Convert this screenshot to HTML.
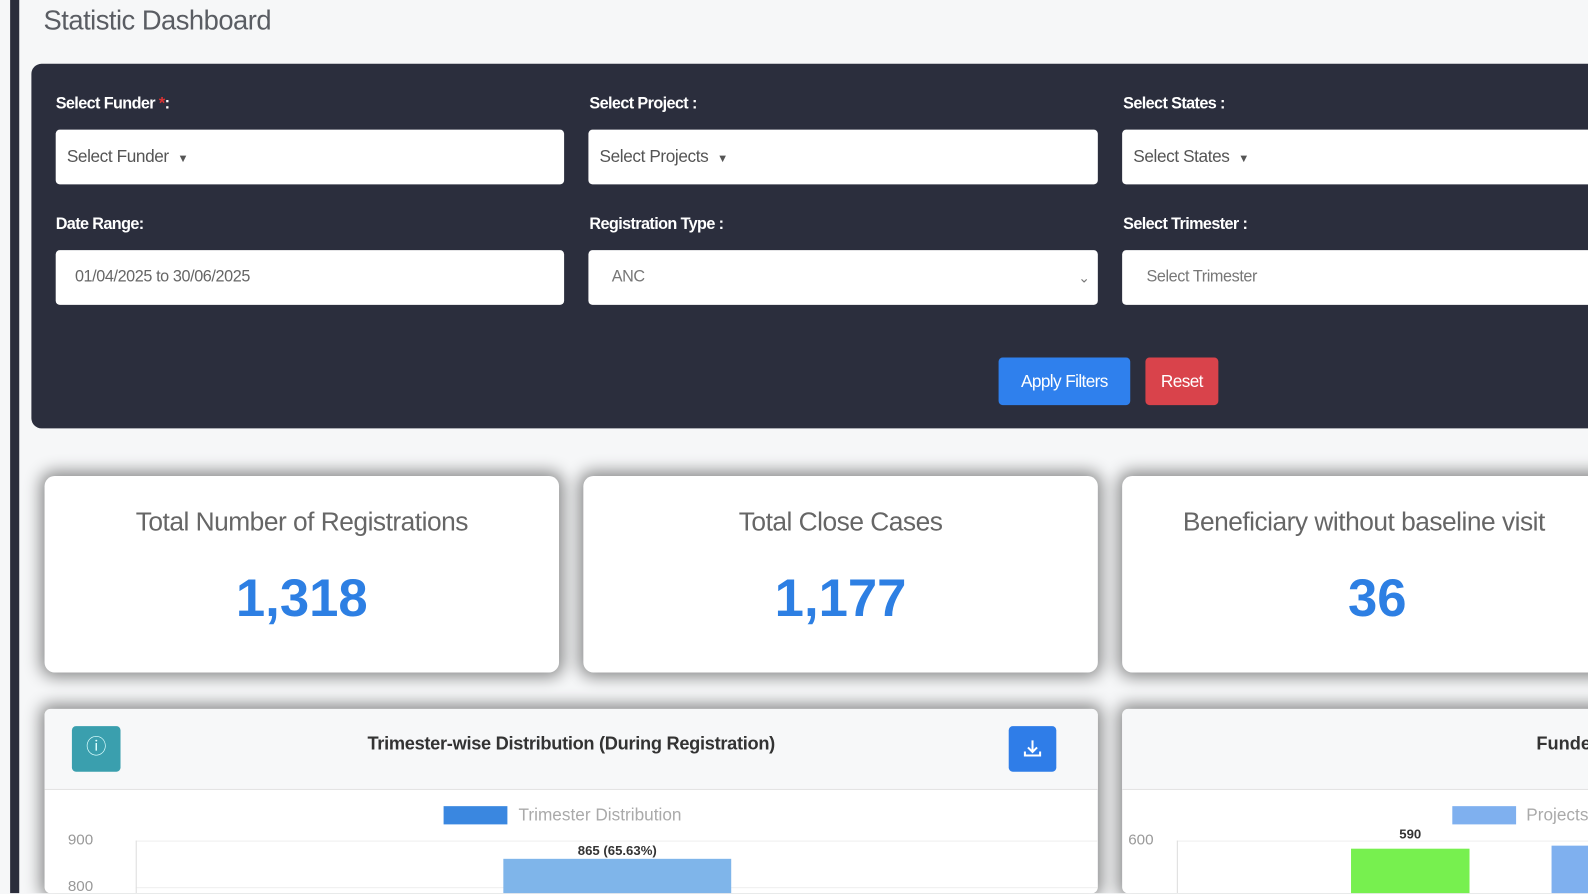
<!DOCTYPE html>
<html><head><meta charset="utf-8"><style>
*{box-sizing:border-box;margin:0;padding:0}
html,body{width:1588px;height:894px;overflow:hidden}
body{background:#f6f7f8;font-family:"Liberation Sans",sans-serif;position:relative}
#w{position:absolute;left:0;top:0;width:1568px;height:882px;transform:scale(1.01276);transform-origin:0 0;overflow:hidden}
.abs{position:absolute}
.bar{left:10px;top:0;width:9px;height:882px;background:#2a2d3b}
.title{left:43px;top:5px;font-size:27px;color:#5a5d63;letter-spacing:-0.5px}
.panel{left:31px;top:63px;width:1600px;height:360px;background:#2b2e3d;border-radius:10px}
.lbl{color:#fff;font-weight:bold;font-size:16px;letter-spacing:-0.6px}
.inp{background:#fff;border-radius:4px;height:54px;font-size:17px;color:#555;padding-left:11px;line-height:54px;letter-spacing:-0.4px}
.btn{color:#fff;font-size:17px;border-radius:4px;text-align:center;line-height:47px;letter-spacing:-0.6px}
.card{background:#fff;border-radius:10px;box-shadow:0 0 16px 4px rgba(0,0,0,0.45);text-align:center}
.ct{font-size:26px;color:#666;margin-top:30px;letter-spacing:-0.5px}
.cn{font-size:52px;color:#2d7fe3;font-weight:bold;margin-top:30px}
.chart{background:#fff;border-radius:6px;box-shadow:0 0 16px 4px rgba(0,0,0,0.45);height:182px;overflow:hidden}
.hdr{height:80px;background:#f7f8f9;border-bottom:1px solid #e3e3e3;position:relative}
.small{font-size:15px;color:#999}
</style></head><body><div id="w">
<div class="abs bar"></div>
<div class="abs title">Statistic Dashboard</div>
<div class="abs panel"></div>
<div class="abs lbl" style="left:55px;top:94px">Select Funder <span style="color:#d33">*</span>:</div>
<div class="abs lbl" style="left:582px;top:94px">Select Project :</div>
<div class="abs lbl" style="left:1109px;top:94px">Select States :</div>
<div class="abs inp" style="left:55px;top:128px;width:502px">Select Funder &nbsp;<span style="font-size:11px">▼</span></div>
<div class="abs inp" style="left:581px;top:128px;width:503px">Select Projects &nbsp;<span style="font-size:11px">▼</span></div>
<div class="abs inp" style="left:1108px;top:128px;width:500px">Select States &nbsp;<span style="font-size:11px">▼</span></div>
<div class="abs lbl" style="left:55px;top:213px">Date Range:</div>
<div class="abs lbl" style="left:582px;top:213px">Registration Type :</div>
<div class="abs lbl" style="left:1109px;top:213px">Select Trimester :</div>
<div class="abs inp" style="left:55px;top:247px;width:502px;padding-left:19px;color:#666;font-size:16px">01/04/2025 to 30/06/2025</div>
<div class="abs inp" style="left:581px;top:247px;width:503px;padding-left:23px;color:#777;font-size:16px">ANC<span style="position:absolute;right:8px;font-size:14px">⌄</span></div>
<div class="abs inp" style="left:1108px;top:247px;width:500px;padding-left:24px;color:#777;font-size:16px">Select Trimester</div>
<div class="abs btn" style="left:986px;top:353px;width:130px;height:47px;background:#2f80ed">Apply Filters</div>
<div class="abs btn" style="left:1131px;top:353px;width:72px;height:47px;background:#d9434b">Reset</div>

<div class="abs card" style="left:44px;top:470px;width:508px;height:194px"><div class="ct">Total Number of Registrations</div><div class="cn">1,318</div></div>
<div class="abs card" style="left:576px;top:470px;width:508px;height:194px"><div class="ct">Total Close Cases</div><div class="cn">1,177</div></div>
<div class="abs card" style="left:1108px;top:470px;width:520px;height:194px;text-align:left"><div class="ct" style="margin-left:60px">Beneficiary without baseline visit</div><div class="cn" style="margin-left:223px">36</div></div>

<div class="abs chart" style="left:44px;top:700px;width:1040px">
 <div class="hdr">
  <div class="abs" style="left:27px;top:17px;width:48px;height:45px;background:#3a9fae;border-radius:4px;color:#dff;text-align:center;line-height:43px;font-size:20px">ⓘ</div>
  <div class="abs" style="left:0;width:1040px;top:24px;text-align:center;font-weight:bold;font-size:18px;color:#333;letter-spacing:-0.3px">Trimester-wise Distribution (During Registration)</div>
  <div class="abs" style="left:952px;top:17px;width:47px;height:45px;background:#2f7de8;border-radius:4px">
   <svg width="47" height="45" viewBox="0 0 47 45"><path d="M23.5 14v11M19 21l4.5 4.5L28 21M16 25v4h15v-4" stroke="#fff" stroke-width="2" fill="none"/></svg>
  </div>
 </div>
 <div class="abs" style="left:394px;top:96px;width:63px;height:18px;background:#3a87e0"></div>
 <div class="abs small" style="left:468px;top:95px;font-size:17px;color:#aaa">Trimester Distribution</div>
 <div class="abs small" style="left:23px;top:121px">900</div>
 <div class="abs small" style="left:23px;top:167px">800</div>
 <div class="abs" style="left:90px;top:130px;width:950px;height:1px;background:#eee"></div>
 <div class="abs" style="left:90px;top:176px;width:950px;height:1px;background:#eee"></div>
 <div class="abs" style="left:90px;top:130px;width:1px;height:60px;background:#ddd"></div>
 <div class="abs" style="left:453px;top:148px;width:225px;height:40px;background:#7fb5ea"></div>
 <div class="abs" style="left:453px;top:132px;width:225px;text-align:center;font-size:13px;font-weight:bold;color:#333">865 (65.63%)</div>
</div>

<div class="abs chart" style="left:1108px;top:700px;width:520px">
 <div class="hdr"><div class="abs" style="left:409px;top:24px;font-weight:bold;font-size:18px;color:#333">Funder</div></div>
 <div class="abs" style="left:326px;top:96px;width:63px;height:18px;background:#7fb0ef"></div>
 <div class="abs small" style="left:399px;top:95px;font-size:17px;color:#aaa">Projects</div>
 <div class="abs small" style="left:6px;top:121px">600</div>
 <div class="abs" style="left:54px;top:130px;width:470px;height:1px;background:#eee"></div>
 <div class="abs" style="left:54px;top:130px;width:1px;height:60px;background:#ddd"></div>
 <div class="abs" style="left:226px;top:138px;width:117px;height:50px;background:#77f04f"></div>
 <div class="abs" style="left:226px;top:116px;width:117px;text-align:center;font-size:13px;font-weight:bold;color:#333">590</div>
 <div class="abs" style="left:424px;top:135px;width:100px;height:50px;background:#7fb0ef"></div>
</div>
</div></body></html>
